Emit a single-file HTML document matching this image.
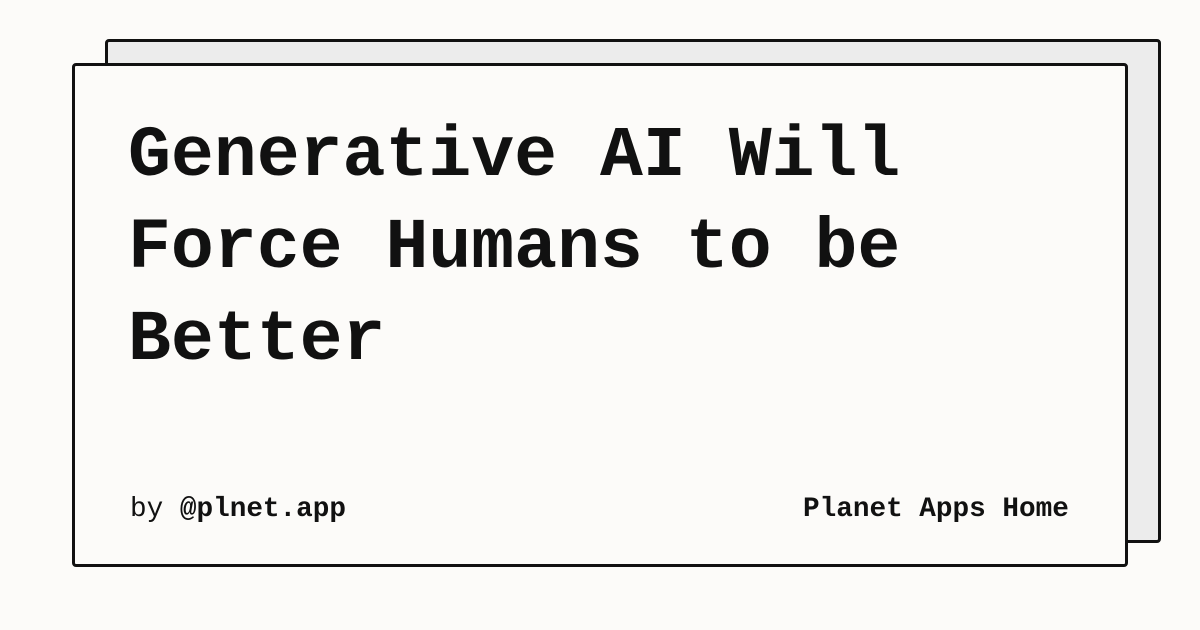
<!DOCTYPE html>
<html><head><style>
html,body{margin:0;padding:0;width:1200px;height:630px;background:#fcfbf9;overflow:hidden}
.back{position:absolute;left:105px;top:39px;width:1050px;height:498px;border:3.5px solid #111;border-radius:4px;background:#ececec}
.front{position:absolute;left:72px;top:63px;width:1050px;height:498px;border:3.5px solid #111;border-radius:4px;background:#fcfbf9}
.t{position:absolute;left:128px;top:111px;font:bold 71.5px/92px "Liberation Mono",monospace;color:#111}
.f{position:absolute;top:494px;font:27.7px "Liberation Mono",monospace;color:#111}
b{font-weight:bold}
</style></head><body>
<div class="back"></div>
<div class="front"></div>
<div class="t">Generative AI Will<br>Force Humans to be<br>Better</div>
<div class="f" style="left:130px">by <b>@plnet.app</b></div>
<div class="f" style="left:803px"><b>Planet Apps Home</b></div>
</body></html>
